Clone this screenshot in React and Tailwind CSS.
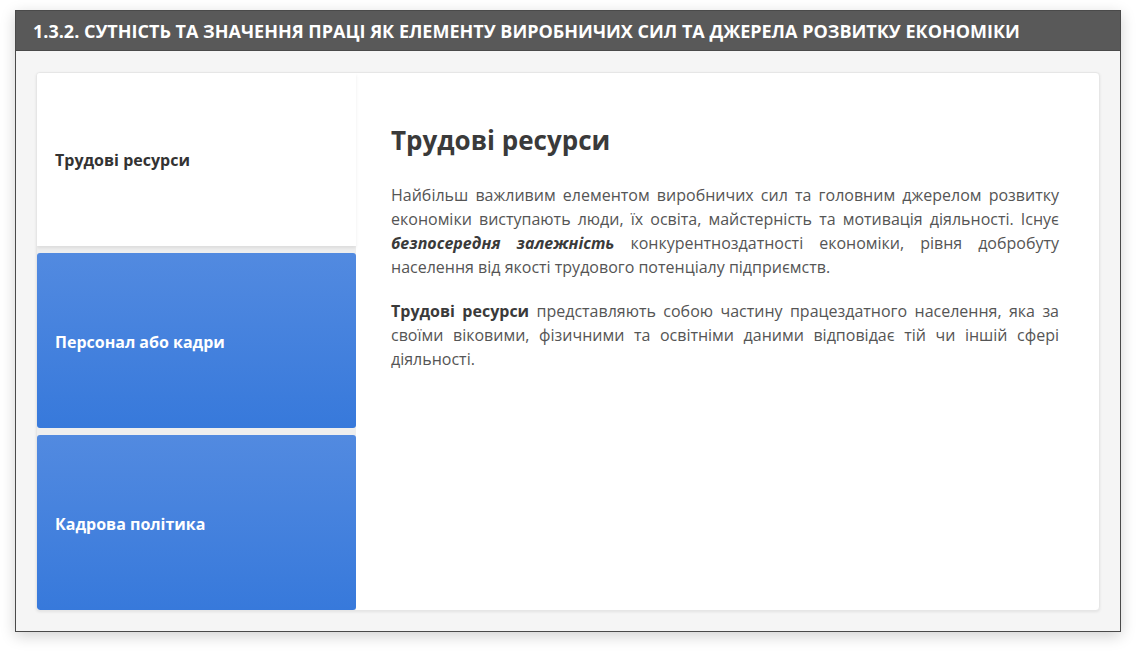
import React, { useState } from 'react'

const tabs = [
  { id: 'resources', title: 'Трудові ресурси' },
  { id: 'staff', title: 'Персонал або кадри' },
  { id: 'policy', title: 'Кадрова політика' },
]

export default function App() {
  const [active, setActive] = useState('resources')

  return (
    <div className="min-h-screen bg-white pt-[10px] pl-[15px] pr-[15px] font-['Open_Sans',sans-serif]">
      <div className="w-[1106px] border border-[#4a4a4a] bg-[#f5f5f5] shadow-[0_4px_14px_rgba(0,0,0,0.18)]">
        {/* Заголовок розділу */}
        <div className="h-[40px] bg-[#595959] border-b border-[#4a4a4a] flex items-center px-[17px]">
          <h1 className="text-white font-bold text-[18px] leading-none uppercase">
            1.3.2. Сутність та значення праці як елементу виробничих сил та джерела розвитку економіки
          </h1>
        </div>

        <div className="px-[20px] pt-[21px] pb-[20px]">
          <div className="flex h-[539px] bg-white rounded-[4px] border border-[#e6e6e6] shadow-[0_1px_3px_rgba(0,0,0,0.08)] overflow-hidden">
            {/* Вкладки */}
            <div className="w-[319px] flex flex-col gap-[7px] bg-[#eeeeee]">
              {tabs.map(tab => (
                <button
                  key={tab.id}
                  onClick={() => setActive(tab.id)}
                  className={
                    active === tab.id
                      ? 'flex-1 text-left pl-[18px] pt-[1px] bg-white text-[#333] font-bold text-[16px] shadow-[0_2px_3px_rgba(0,0,0,0.08)]'
                      : 'flex-1 text-left pl-[18px] pt-[3px] rounded-[3px] bg-gradient-to-b from-[#528ae0] to-[#3779db] text-white font-bold text-[16px]'
                  }
                >
                  {tab.title}
                </button>
              ))}
            </div>

            {/* Вміст */}
            <div className="flex-1 pl-[35px] pr-[40px] pt-[52px] text-[#555] text-[16px] leading-[24px]">
              <h2 className="text-[26px] leading-[31px] font-bold text-[#3a3a3a] mb-[27px]">Трудові ресурси</h2>
              <p className="text-justify mb-[20px]">
                Найбільш важливим елементом виробничих сил та головним джерелом розвитку економіки виступають люди, їх освіта, майстерність та мотивація діяльності. Існує{' '}
                <b><i className="text-[#3a3a3a]">безпосередня залежність</i></b> конкурентноздатності економіки, рівня добробуту населення від якості трудового потенціалу підприємств.
              </p>
              <p className="text-justify">
                <b className="text-[#3a3a3a]">Трудові ресурси</b> представляють собою частину працездатного населення, яка за своїми віковими, фізичними та освітніми даними відповідає тій чи іншій сфері діяльності.
              </p>
            </div>
          </div>
        </div>
      </div>
    </div>
  )
}
